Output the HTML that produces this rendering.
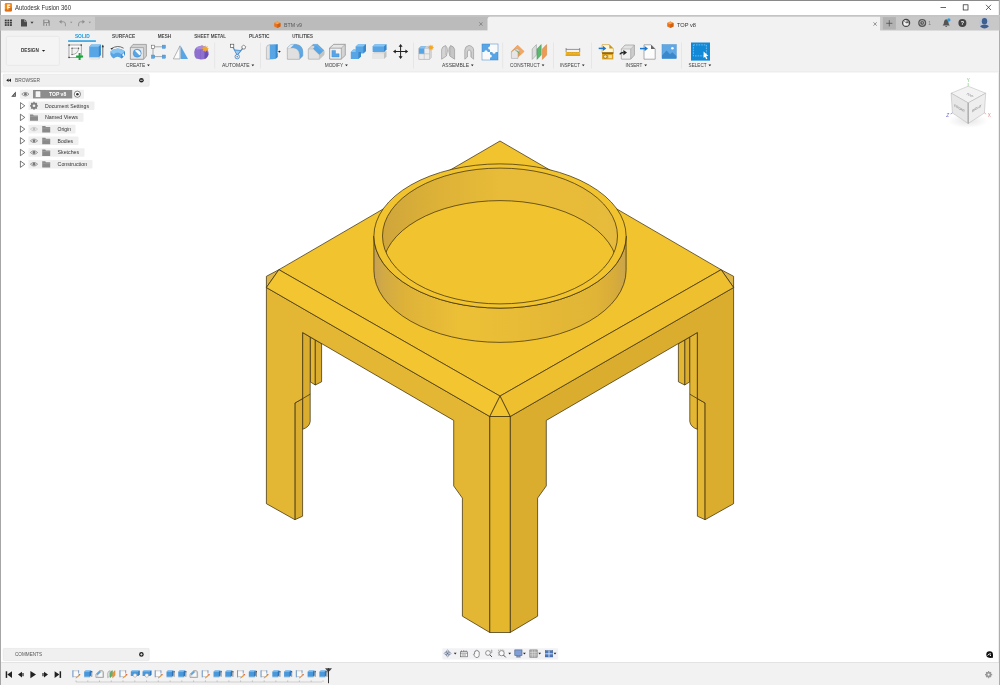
<!DOCTYPE html>
<html><head><meta charset="utf-8"><title>Autodesk Fusion 360</title>
<style>
html,body{margin:0;padding:0;background:#fff;}
body{width:1000px;height:685px;overflow:hidden;position:relative;font-family:"Liberation Sans", sans-serif;}
svg{position:absolute;left:0;top:0;display:block;will-change:transform}
text{font-family:"Liberation Sans", sans-serif;}
</style></head><body>
<svg width="1000" height="685" viewBox="0 0 1000 685">
<rect x="0" y="0" width="1000" height="15" fill="#ffffff" />
<rect x="0" y="0" width="1000" height="1" fill="#8a8a8a" />
<rect x="0" y="0" width="1" height="685" fill="#a6a6a6" />
<rect x="998.8" y="0" width="1.2" height="685" fill="#adadad" />
<g id="appicon"><rect x="4.8" y="3" width="7.2" height="8.4" rx="1.2" fill="#f08a1d"/><path d="M7.2,4.5 h3 v1.2 h-1.7 v1.2 h1.4 v1.2 h-1.4 v2 h-1.3 z" fill="#fff"/><path d="M4.8,9.5 l7.2,-2 v2.7 a1.2,1.2 0 0 1 -1.2,1.2 h-4.8 a1.2,1.2 0 0 1 -1.2,-1.2z" fill="#c85a10" opacity="0.55"/></g>
<text x="15" y="9.7" font-size="6.4" fill="#333" font-weight="normal" textLength="56" lengthAdjust="spacingAndGlyphs" >Autodesk Fusion 360</text>
<path d="M940.5,7.5 h5.5 M986,4.8 l5,5.2 M991,4.8 l-5,5.2" stroke="#222" stroke-width="0.7" fill="none"/><rect x="963.2" y="4.8" width="4.8" height="5.2" fill="none" stroke="#222" stroke-width="0.7"/>
<rect x="0" y="15" width="1000" height="15.8" fill="#bbbbbb" />
<rect x="1" y="15.9" width="94" height="14.6" fill="#cbcbcb" />
<path d="M491.5,15.8 H880.3 V31 H487.5 V19.4 Q487.6,16.6 491.5,15.8 Z" fill="#f2f2f2"/>
<path d="M0,15.8 H484 Q487.5,16 487.5,20 V30.5 H0 Z" fill="none"/>
<rect x="880.3" y="15.8" width="118.7" height="14.7" fill="#c8c8c8" />
<rect x="882.8" y="17.1" width="13.1" height="12.4" fill="#b2b2b2" />
<rect x="0" y="15" width="1000" height="1.7" fill="#c4c4c4" />
<rect x="1" y="30.5" width="998" height="40.5" fill="#f2f2f2" />
<defs><linearGradient id="gTb" x1="0" x2="0" y1="0" y2="1"><stop offset="0" stop-color="#f0f0f0"/><stop offset="0.5" stop-color="#ebebeb"/><stop offset="1" stop-color="#ffffff"/></linearGradient></defs><rect x="1" y="70.8" width="998" height="2.2" fill="url(#gTb)"/>
<rect x="6.4" y="36.4" width="53" height="29" rx="1.5" fill="#f4f4f4" stroke="#e2e2e2" stroke-width="0.6"/>
<text x="21" y="52.3" font-size="5.2" fill="#333" font-weight="bold" textLength="17.8" lengthAdjust="spacingAndGlyphs" >DESIGN</text>
<path d="M41.9,49.9 h3.3 l-1.65,1.9 z" fill="#222"/>
<text x="74.9" y="37.7" font-size="4.7" fill="#1a98dc" font-weight="bold" textLength="14.8" lengthAdjust="spacingAndGlyphs" >SOLID</text>
<rect x="68.1" y="40.3" width="27.8" height="1.5" fill="#1c9ce2" />
<text x="112.1" y="37.7" font-size="4.7" fill="#484848" font-weight="bold" textLength="23" lengthAdjust="spacingAndGlyphs" >SURFACE</text>
<text x="157.7" y="37.7" font-size="4.7" fill="#484848" font-weight="bold" textLength="13.5" lengthAdjust="spacingAndGlyphs" >MESH</text>
<text x="194.2" y="37.7" font-size="4.7" fill="#484848" font-weight="bold" textLength="31.8" lengthAdjust="spacingAndGlyphs" >SHEET METAL</text>
<text x="249" y="37.7" font-size="4.7" fill="#484848" font-weight="bold" textLength="20.5" lengthAdjust="spacingAndGlyphs" >PLASTIC</text>
<text x="292.2" y="37.7" font-size="4.7" fill="#484848" font-weight="bold" textLength="20.8" lengthAdjust="spacingAndGlyphs" >UTILITIES</text>
<text x="126" y="67.2" font-size="5.0" fill="#3c3c3c" font-weight="normal" textLength="19.2" lengthAdjust="spacingAndGlyphs" >CREATE</text>
<path d="M147.1,64.4 h2.7 l-1.35,1.8 z" fill="#222"/>
<text x="222" y="67.2" font-size="5.0" fill="#3c3c3c" font-weight="normal" textLength="27.6" lengthAdjust="spacingAndGlyphs" >AUTOMATE</text>
<path d="M251.5,64.4 h2.7 l-1.35,1.8 z" fill="#222"/>
<text x="324.7" y="67.2" font-size="5.0" fill="#3c3c3c" font-weight="normal" textLength="18.5" lengthAdjust="spacingAndGlyphs" >MODIFY</text>
<path d="M345.09999999999997,64.4 h2.7 l-1.35,1.8 z" fill="#222"/>
<text x="442" y="67.2" font-size="5.0" fill="#3c3c3c" font-weight="normal" textLength="27" lengthAdjust="spacingAndGlyphs" >ASSEMBLE</text>
<path d="M470.9,64.4 h2.7 l-1.35,1.8 z" fill="#222"/>
<text x="510.1" y="67.2" font-size="5.0" fill="#3c3c3c" font-weight="normal" textLength="29.7" lengthAdjust="spacingAndGlyphs" >CONSTRUCT</text>
<path d="M541.7,64.4 h2.7 l-1.35,1.8 z" fill="#222"/>
<text x="559.9" y="67.2" font-size="5.0" fill="#3c3c3c" font-weight="normal" textLength="20.1" lengthAdjust="spacingAndGlyphs" >INSPECT</text>
<path d="M581.9,64.4 h2.7 l-1.35,1.8 z" fill="#222"/>
<text x="625.6" y="67.2" font-size="5.0" fill="#3c3c3c" font-weight="normal" textLength="16.8" lengthAdjust="spacingAndGlyphs" >INSERT</text>
<path d="M644.3,64.4 h2.7 l-1.35,1.8 z" fill="#222"/>
<text x="688.6" y="67.2" font-size="5.0" fill="#3c3c3c" font-weight="normal" textLength="18" lengthAdjust="spacingAndGlyphs" >SELECT</text>
<path d="M708.5,64.4 h2.7 l-1.35,1.8 z" fill="#222"/>
<rect x="214.5" y="42.5" width="0.6" height="26" fill="#dedede" />
<rect x="260" y="42.5" width="0.6" height="26" fill="#dedede" />
<rect x="413" y="42.5" width="0.6" height="26" fill="#dedede" />
<rect x="502.5" y="42.5" width="0.6" height="26" fill="#dedede" />
<rect x="553" y="42.5" width="0.6" height="26" fill="#dedede" />
<rect x="591" y="42.5" width="0.6" height="26" fill="#dedede" />
<rect x="681" y="42.5" width="0.6" height="26" fill="#dedede" />
<g transform="translate(274.2,21.2) scale(0.95)"><path d="M0,1.8 L3.3,0.4 L6.6,1.8 L6.6,5.6 L3.3,7.2 L0,5.6 Z" fill="#e8731c"/><path d="M0,1.8 L3.3,0.4 L6.6,1.8 L3.3,3.3 Z" fill="#f7a352"/><path d="M3.3,3.3 L6.6,1.8 L6.6,5.6 L3.3,7.2 Z" fill="#cf5f12"/></g>
<text x="284" y="26.8" font-size="6.2" fill="#555" font-weight="normal" textLength="18" lengthAdjust="spacingAndGlyphs" >BTM v9</text>
<path d="M479.3,22.3 l3.2,3.4 m0,-3.4 l-3.2,3.4" stroke="#666" stroke-width="0.6" fill="none"/>
<g transform="translate(667.2,21.2) scale(0.95)"><path d="M0,1.8 L3.3,0.4 L6.6,1.8 L6.6,5.6 L3.3,7.2 L0,5.6 Z" fill="#e8731c"/><path d="M0,1.8 L3.3,0.4 L6.6,1.8 L3.3,3.3 Z" fill="#f7a352"/><path d="M3.3,3.3 L6.6,1.8 L6.6,5.6 L3.3,7.2 Z" fill="#cf5f12"/></g>
<text x="677" y="26.8" font-size="6.2" fill="#333" font-weight="normal" textLength="19" lengthAdjust="spacingAndGlyphs" >TOP v8</text>
<path d="M873.5,22.3 l3.2,3.4 m0,-3.4 l-3.2,3.4" stroke="#555" stroke-width="0.6" fill="none"/>
<rect x="3.2" y="74.2" width="146" height="12" rx="1" fill="#f0f0f0" stroke="#dddddd" stroke-width="0.5"/>
<text x="15" y="82" font-size="4.7" fill="#555" font-weight="normal" textLength="25" lengthAdjust="spacingAndGlyphs" >BROWSER</text>
<path d="M6.2,80.2 l2.4,-1.7 v3.4 z M8.6,80.2 l2.4,-1.7 v3.4 z" fill="#222"/>
<circle cx="141.4" cy="80.2" r="2.3" fill="#222"/><rect x="140.1" y="79.8" width="2.6" height="0.8" fill="#fff"/>
<rect x="3.2" y="648.4" width="146" height="12.2" rx="1" fill="#f0f0f0" stroke="#dddddd" stroke-width="0.5"/>
<text x="15" y="656.2" font-size="4.7" fill="#555" font-weight="normal" textLength="27" lengthAdjust="spacingAndGlyphs" >COMMENTS</text>
<circle cx="141.4" cy="654.4" r="2.3" fill="#222"/><path d="M140.2,654.4 h2.4 M141.4,653.2 v2.4" stroke="#fff" stroke-width="0.7"/>
<rect x="1" y="662.4" width="998" height="22.6" fill="#f2f2f2" />
<rect x="1" y="662.0" width="998" height="0.7" fill="#dadada" />
<path d="M11.2,96.8 L15.8,96.8 L15.8,91.60000000000001 Z" fill="#444"/><path d="M13.3,95.8 L14.9,95.8 L14.9,93.9 Z" fill="#fff" opacity="0.7"/>
<rect x="20" y="89.7" width="64" height="9" rx="1" fill="#f0f0f0"/>
<g opacity="1"><path d="M21.799999999999997,94.2 Q25.4,90.60000000000001 29.0,94.2 Q25.4,97.8 21.799999999999997,94.2 Z" fill="none" stroke="#777" stroke-width="0.7"/><circle cx="25.4" cy="94.2" r="1.4" fill="#777"/></g>
<rect x="33" y="90.0" width="39.2" height="8.4" fill="#8c8c8c"/>
<rect x="35.2" y="91.0" width="5.6" height="6.4" fill="#f4f4f4" stroke="#666" stroke-width="0.4"/>
<text x="49" y="96.0" font-size="5" fill="#fff" font-weight="bold" textLength="17.2" lengthAdjust="spacingAndGlyphs" >TOP v8</text>
<circle cx="77.4" cy="94.2" r="3.1" fill="#fff" stroke="#333" stroke-width="0.6"/><circle cx="77.4" cy="94.2" r="1.3" fill="#333"/>
<path d="M20.4,102.6 L24.799999999999997,105.8 L20.4,109.0 Z" fill="#fff" stroke="#333" stroke-width="0.65" stroke-linejoin="round"/>
<rect x="28.5" y="101.5" width="12" height="8.6" fill="#f0f0f0"/>
<g transform="translate(34,105.8)"><circle r="2.5" fill="none" stroke="#808080" stroke-width="1.5"/><g stroke="#808080" stroke-width="1.3"><path d="M0,-4 V4 M-4,0 H4 M-2.8,-2.8 L2.8,2.8 M-2.8,2.8 L2.8,-2.8"/></g><circle r="1.3" fill="#f0f0f0"/></g>
<rect x="40" y="101.5" width="54.5" height="8.6" rx="1" fill="#efefef"/>
<text x="45" y="107.6" font-size="5" fill="#333" font-weight="normal" textLength="44" lengthAdjust="spacingAndGlyphs" >Document Settings</text>
<path d="M20.4,114.2 L24.799999999999997,117.4 L20.4,120.60000000000001 Z" fill="#fff" stroke="#333" stroke-width="0.65" stroke-linejoin="round"/>
<rect x="28.5" y="113.10000000000001" width="12" height="8.6" fill="#f0f0f0"/>
<path d="M30,114.4 h3 l0.8,1 h4.2 v5.4 h-8 z" fill="#8a8a8a"/><path d="M30,116.5 h8" stroke="#b5b5b5" stroke-width="0.4"/>
<rect x="40" y="113.10000000000001" width="43.5" height="8.6" rx="1" fill="#efefef"/>
<text x="45" y="119.2" font-size="5" fill="#333" font-weight="normal" textLength="33" lengthAdjust="spacingAndGlyphs" >Named Views</text>
<path d="M20.4,125.89999999999999 L24.799999999999997,129.1 L20.4,132.29999999999998 Z" fill="#fff" stroke="#333" stroke-width="0.65" stroke-linejoin="round"/>
<rect x="28.5" y="124.8" width="24" height="8.6" fill="#f0f0f0"/>
<g opacity="0.7"><path d="M30.4,129.1 Q34,125.5 37.6,129.1 Q34,132.7 30.4,129.1 Z" fill="none" stroke="#aaa" stroke-width="0.7"/><circle cx="34" cy="129.1" r="1.4" fill="#aaa"/></g>
<path d="M42.2,126.1 h3 l0.8,1 h4.2 v5.4 h-8 z" fill="#8a8a8a"/><path d="M42.2,128.2 h8" stroke="#b5b5b5" stroke-width="0.4"/>
<rect x="52" y="124.8" width="23.5" height="8.6" rx="1" fill="#efefef"/>
<text x="57.6" y="130.9" font-size="5" fill="#333" font-weight="normal" textLength="13.5" lengthAdjust="spacingAndGlyphs" >Origin</text>
<path d="M20.4,137.60000000000002 L24.799999999999997,140.8 L20.4,144.0 Z" fill="#fff" stroke="#333" stroke-width="0.65" stroke-linejoin="round"/>
<rect x="28.5" y="136.5" width="24" height="8.6" fill="#f0f0f0"/>
<g opacity="1"><path d="M30.4,140.8 Q34,137.20000000000002 37.6,140.8 Q34,144.4 30.4,140.8 Z" fill="none" stroke="#777" stroke-width="0.7"/><circle cx="34" cy="140.8" r="1.4" fill="#777"/></g>
<path d="M42.2,137.8 h3 l0.8,1 h4.2 v5.4 h-8 z" fill="#8a8a8a"/><path d="M42.2,139.9 h8" stroke="#b5b5b5" stroke-width="0.4"/>
<rect x="52" y="136.5" width="26.5" height="8.6" rx="1" fill="#efefef"/>
<text x="57.6" y="142.60000000000002" font-size="5" fill="#333" font-weight="normal" textLength="15.5" lengthAdjust="spacingAndGlyphs" >Bodies</text>
<path d="M20.4,149.3 L24.799999999999997,152.5 L20.4,155.7 Z" fill="#fff" stroke="#333" stroke-width="0.65" stroke-linejoin="round"/>
<rect x="28.5" y="148.2" width="24" height="8.6" fill="#f0f0f0"/>
<g opacity="1"><path d="M30.4,152.5 Q34,148.9 37.6,152.5 Q34,156.1 30.4,152.5 Z" fill="none" stroke="#777" stroke-width="0.7"/><circle cx="34" cy="152.5" r="1.4" fill="#777"/></g>
<path d="M42.2,149.5 h3 l0.8,1 h4.2 v5.4 h-8 z" fill="#8a8a8a"/><path d="M42.2,151.6 h8" stroke="#b5b5b5" stroke-width="0.4"/>
<rect x="52" y="148.2" width="32.5" height="8.6" rx="1" fill="#efefef"/>
<text x="57.6" y="154.3" font-size="5" fill="#333" font-weight="normal" textLength="21.5" lengthAdjust="spacingAndGlyphs" >Sketches</text>
<path d="M20.4,161.0 L24.799999999999997,164.2 L20.4,167.39999999999998 Z" fill="#fff" stroke="#333" stroke-width="0.65" stroke-linejoin="round"/>
<rect x="28.5" y="159.89999999999998" width="24" height="8.6" fill="#f0f0f0"/>
<g opacity="1"><path d="M30.4,164.2 Q34,160.6 37.6,164.2 Q34,167.79999999999998 30.4,164.2 Z" fill="none" stroke="#777" stroke-width="0.7"/><circle cx="34" cy="164.2" r="1.4" fill="#777"/></g>
<path d="M42.2,161.2 h3 l0.8,1 h4.2 v5.4 h-8 z" fill="#8a8a8a"/><path d="M42.2,163.29999999999998 h8" stroke="#b5b5b5" stroke-width="0.4"/>
<rect x="52" y="159.89999999999998" width="40.5" height="8.6" rx="1" fill="#efefef"/>
<text x="57.6" y="166.0" font-size="5" fill="#333" font-weight="normal" textLength="29.5" lengthAdjust="spacingAndGlyphs" >Construction</text>
<g fill="#222"><rect x="5.7" y="671.3000000000001" width="1.5" height="6.6"/><path d="M12,671.3000000000001 L7.3,674.6 L12,677.9 Z"/><path d="M22,671.8000000000001 L18,674.6 L22,677.4 Z"/><rect x="22.4" y="673.0" width="1.2" height="3.2"/><path d="M30.4,671.0 L36,674.6 L30.4,678.2 Z"/><path d="M44,671.8000000000001 L48,674.6 L44,677.4 Z"/><rect x="42.4" y="673.0" width="1.2" height="3.2"/><path d="M54.6,671.3000000000001 L59.4,674.6 L54.6,677.9 Z"/><rect x="59.6" y="671.3000000000001" width="1.5" height="6.6"/></g>
<g transform="translate(72.0,669.8)"><path d="M0.9,1 H6.6 V6.8 H0.9 Z" fill="#f9f9f9" stroke="#a4a4a4" stroke-width="0.5"/><path d="M0.9,0.4 V7.6" stroke="#4a86cc" stroke-width="0.7"/><path d="M6.6,0.4 V3" stroke="#4a86cc" stroke-width="0.6"/><path d="M4,7.6 L7.6,4.2 L8.4,5 L4.8,8.2 Z" fill="#f0962a"/><path d="M7,4.8 L7.6,4.2 L8.4,5 L7.8,5.6 Z" fill="#d84a3a"/><path d="M4,7.6 L4.8,8.2 L3.6,8.5 Z" fill="#555"/></g>
<g transform="translate(83.76,669.8)"><path d="M0.4,6.6 H5.8 L7.2,5.4 V7 L5.8,8.2 H0.4 Z" fill="#dadada"/><path d="M0.4,2 L1.8,0.6 H7.2 V5.6 L5.8,7 H0.4 Z" fill="#4a98dc"/><path d="M0.4,2 L1.8,0.6 H7.2 L5.8,2 Z" fill="#86c0f0"/><path d="M5.8,2 L7.2,0.6 V5.6 L5.8,7 Z" fill="#2e73b8"/><path d="M8,1.2 v5.8" stroke="#444" stroke-width="0.6"/><path d="M7.3,2.4 L8,0.8 L8.7,2.4 Z" fill="#444"/></g>
<g transform="translate(95.52,669.8)"><path d="M0.4,4.4 L4.2,0.8 H6.4 Q8,1 8,3 V7.6 H0.4 Z" fill="#ececec" stroke="#777" stroke-width="0.55" stroke-linejoin="round"/><path d="M0.8,4.2 L4.2,1 L5.6,2.2 L2.2,5.4 Z" fill="#5aa5e6"/><path d="M2.2,5.4 L5.6,2.2 H7 V7.2 H2.2 Z" fill="#f7f7f7" stroke="#999" stroke-width="0.3"/></g>
<g transform="translate(107.28,669.8)"><path d="M0.4,3.4 Q0.6,1.6 2.8,0.8 V5.8 L0.4,8 Z" fill="#e2e2e2" stroke="#8a8a8a" stroke-width="0.5" stroke-linejoin="round"/><path d="M2.8,3.2 Q3.2,1.4 5.2,0.8 V5.8 L2.8,8 Z" fill="#5cb56c" stroke="#3b8a4a" stroke-width="0.35" stroke-linejoin="round"/><path d="M5.3,3 L7.8,0.8 V5.8 L5.3,8 Z" fill="#ee9a3c" stroke="#c07020" stroke-width="0.35" stroke-linejoin="round"/></g>
<g transform="translate(119.03999999999999,669.8)"><path d="M0.9,1 H6.6 V6.8 H0.9 Z" fill="#f9f9f9" stroke="#a4a4a4" stroke-width="0.5"/><path d="M0.9,0.4 V7.6" stroke="#4a86cc" stroke-width="0.7"/><path d="M6.6,0.4 V3" stroke="#4a86cc" stroke-width="0.6"/><path d="M4,7.6 L7.6,4.2 L8.4,5 L4.8,8.2 Z" fill="#f0962a"/><path d="M7,4.8 L7.6,4.2 L8.4,5 L7.8,5.6 Z" fill="#d84a3a"/><path d="M4,7.6 L4.8,8.2 L3.6,8.5 Z" fill="#555"/></g>
<g transform="translate(130.8,669.8)"><path d="M0,1.8 L1.2,0.6 H8.8 V4.8 L7.6,6.2 H0 Z" fill="#4a98dc"/><path d="M0,1.8 L1.2,0.6 H8.8 L7.6,1.8 Z" fill="#86c0f0"/><path d="M7.6,1.8 L8.8,0.6 V4.8 L7.6,6.2 Z" fill="#2e73b8"/><path d="M2.4,4.6 Q4.2,3 6,4.6 V6.4 Q4.2,8.8 2.4,6.4 Z" fill="#f6f6f6" stroke="#888" stroke-width="0.45"/></g>
<g transform="translate(142.56,669.8)"><path d="M0,1.8 L1.2,0.6 H8.8 V4.8 L7.6,6.2 H0 Z" fill="#4a98dc"/><path d="M0,1.8 L1.2,0.6 H8.8 L7.6,1.8 Z" fill="#86c0f0"/><path d="M7.6,1.8 L8.8,0.6 V4.8 L7.6,6.2 Z" fill="#2e73b8"/><path d="M2.4,4.6 Q4.2,3 6,4.6 V6.4 Q4.2,8.8 2.4,6.4 Z" fill="#f6f6f6" stroke="#888" stroke-width="0.45"/></g>
<g transform="translate(154.32,669.8)"><path d="M0.9,1 H6.6 V6.8 H0.9 Z" fill="#f9f9f9" stroke="#a4a4a4" stroke-width="0.5"/><path d="M0.9,0.4 V7.6" stroke="#4a86cc" stroke-width="0.7"/><path d="M6.6,0.4 V3" stroke="#4a86cc" stroke-width="0.6"/><path d="M4,7.6 L7.6,4.2 L8.4,5 L4.8,8.2 Z" fill="#f0962a"/><path d="M7,4.8 L7.6,4.2 L8.4,5 L7.8,5.6 Z" fill="#d84a3a"/><path d="M4,7.6 L4.8,8.2 L3.6,8.5 Z" fill="#555"/></g>
<g transform="translate(166.07999999999998,669.8)"><path d="M0.4,6.6 H5.8 L7.2,5.4 V7 L5.8,8.2 H0.4 Z" fill="#dadada"/><path d="M0.4,2 L1.8,0.6 H7.2 V5.6 L5.8,7 H0.4 Z" fill="#4a98dc"/><path d="M0.4,2 L1.8,0.6 H7.2 L5.8,2 Z" fill="#86c0f0"/><path d="M5.8,2 L7.2,0.6 V5.6 L5.8,7 Z" fill="#2e73b8"/><path d="M8,1.2 v5.8" stroke="#444" stroke-width="0.6"/><path d="M7.3,2.4 L8,0.8 L8.7,2.4 Z" fill="#444"/></g>
<g transform="translate(177.84,669.8)"><path d="M0.4,6.6 H5.8 L7.2,5.4 V7 L5.8,8.2 H0.4 Z" fill="#dadada"/><path d="M0.4,2 L1.8,0.6 H7.2 V5.6 L5.8,7 H0.4 Z" fill="#4a98dc"/><path d="M0.4,2 L1.8,0.6 H7.2 L5.8,2 Z" fill="#86c0f0"/><path d="M5.8,2 L7.2,0.6 V5.6 L5.8,7 Z" fill="#2e73b8"/><path d="M8,1.2 v5.8" stroke="#444" stroke-width="0.6"/><path d="M7.3,2.4 L8,0.8 L8.7,2.4 Z" fill="#444"/></g>
<g transform="translate(189.6,669.8)"><path d="M0.4,4.4 L4.2,0.8 H6.4 Q8,1 8,3 V7.6 H0.4 Z" fill="#ececec" stroke="#777" stroke-width="0.55" stroke-linejoin="round"/><path d="M0.8,4.2 L4.2,1 L5.6,2.2 L2.2,5.4 Z" fill="#5aa5e6"/><path d="M2.2,5.4 L5.6,2.2 H7 V7.2 H2.2 Z" fill="#f7f7f7" stroke="#999" stroke-width="0.3"/></g>
<g transform="translate(201.35999999999999,669.8)"><path d="M0.9,1 H6.6 V6.8 H0.9 Z" fill="#f9f9f9" stroke="#a4a4a4" stroke-width="0.5"/><path d="M0.9,0.4 V7.6" stroke="#4a86cc" stroke-width="0.7"/><path d="M6.6,0.4 V3" stroke="#4a86cc" stroke-width="0.6"/><path d="M4,7.6 L7.6,4.2 L8.4,5 L4.8,8.2 Z" fill="#f0962a"/><path d="M7,4.8 L7.6,4.2 L8.4,5 L7.8,5.6 Z" fill="#d84a3a"/><path d="M4,7.6 L4.8,8.2 L3.6,8.5 Z" fill="#555"/></g>
<g transform="translate(213.12,669.8)"><path d="M0.4,6.6 H5.8 L7.2,5.4 V7 L5.8,8.2 H0.4 Z" fill="#dadada"/><path d="M0.4,2 L1.8,0.6 H7.2 V5.6 L5.8,7 H0.4 Z" fill="#4a98dc"/><path d="M0.4,2 L1.8,0.6 H7.2 L5.8,2 Z" fill="#86c0f0"/><path d="M5.8,2 L7.2,0.6 V5.6 L5.8,7 Z" fill="#2e73b8"/><path d="M8,1.2 v5.8" stroke="#444" stroke-width="0.6"/><path d="M7.3,2.4 L8,0.8 L8.7,2.4 Z" fill="#444"/></g>
<g transform="translate(224.88,669.8)"><path d="M0.4,6.6 H5.8 L7.2,5.4 V7 L5.8,8.2 H0.4 Z" fill="#dadada"/><path d="M0.4,2 L1.8,0.6 H7.2 V5.6 L5.8,7 H0.4 Z" fill="#4a98dc"/><path d="M0.4,2 L1.8,0.6 H7.2 L5.8,2 Z" fill="#86c0f0"/><path d="M5.8,2 L7.2,0.6 V5.6 L5.8,7 Z" fill="#2e73b8"/><path d="M8,1.2 v5.8" stroke="#444" stroke-width="0.6"/><path d="M7.3,2.4 L8,0.8 L8.7,2.4 Z" fill="#444"/></g>
<g transform="translate(236.64,669.8)"><path d="M0.9,1 H6.6 V6.8 H0.9 Z" fill="#f9f9f9" stroke="#a4a4a4" stroke-width="0.5"/><path d="M0.9,0.4 V7.6" stroke="#4a86cc" stroke-width="0.7"/><path d="M6.6,0.4 V3" stroke="#4a86cc" stroke-width="0.6"/><path d="M4,7.6 L7.6,4.2 L8.4,5 L4.8,8.2 Z" fill="#f0962a"/><path d="M7,4.8 L7.6,4.2 L8.4,5 L7.8,5.6 Z" fill="#d84a3a"/><path d="M4,7.6 L4.8,8.2 L3.6,8.5 Z" fill="#555"/></g>
<g transform="translate(248.4,669.8)"><path d="M0.4,6.6 H5.8 L7.2,5.4 V7 L5.8,8.2 H0.4 Z" fill="#dadada"/><path d="M0.4,2 L1.8,0.6 H7.2 V5.6 L5.8,7 H0.4 Z" fill="#4a98dc"/><path d="M0.4,2 L1.8,0.6 H7.2 L5.8,2 Z" fill="#86c0f0"/><path d="M5.8,2 L7.2,0.6 V5.6 L5.8,7 Z" fill="#2e73b8"/><path d="M8,1.2 v5.8" stroke="#444" stroke-width="0.6"/><path d="M7.3,2.4 L8,0.8 L8.7,2.4 Z" fill="#444"/></g>
<g transform="translate(260.15999999999997,669.8)"><path d="M0.9,1 H6.6 V6.8 H0.9 Z" fill="#f9f9f9" stroke="#a4a4a4" stroke-width="0.5"/><path d="M0.9,0.4 V7.6" stroke="#4a86cc" stroke-width="0.7"/><path d="M6.6,0.4 V3" stroke="#4a86cc" stroke-width="0.6"/><path d="M4,7.6 L7.6,4.2 L8.4,5 L4.8,8.2 Z" fill="#f0962a"/><path d="M7,4.8 L7.6,4.2 L8.4,5 L7.8,5.6 Z" fill="#d84a3a"/><path d="M4,7.6 L4.8,8.2 L3.6,8.5 Z" fill="#555"/></g>
<g transform="translate(271.91999999999996,669.8)"><path d="M0.4,6.6 H5.8 L7.2,5.4 V7 L5.8,8.2 H0.4 Z" fill="#dadada"/><path d="M0.4,2 L1.8,0.6 H7.2 V5.6 L5.8,7 H0.4 Z" fill="#4a98dc"/><path d="M0.4,2 L1.8,0.6 H7.2 L5.8,2 Z" fill="#86c0f0"/><path d="M5.8,2 L7.2,0.6 V5.6 L5.8,7 Z" fill="#2e73b8"/><path d="M8,1.2 v5.8" stroke="#444" stroke-width="0.6"/><path d="M7.3,2.4 L8,0.8 L8.7,2.4 Z" fill="#444"/></g>
<g transform="translate(283.68,669.8)"><path d="M0.4,6.6 H5.8 L7.2,5.4 V7 L5.8,8.2 H0.4 Z" fill="#dadada"/><path d="M0.4,2 L1.8,0.6 H7.2 V5.6 L5.8,7 H0.4 Z" fill="#4a98dc"/><path d="M0.4,2 L1.8,0.6 H7.2 L5.8,2 Z" fill="#86c0f0"/><path d="M5.8,2 L7.2,0.6 V5.6 L5.8,7 Z" fill="#2e73b8"/><path d="M8,1.2 v5.8" stroke="#444" stroke-width="0.6"/><path d="M7.3,2.4 L8,0.8 L8.7,2.4 Z" fill="#444"/></g>
<g transform="translate(295.44,669.8)"><path d="M0.9,1 H6.6 V6.8 H0.9 Z" fill="#f9f9f9" stroke="#a4a4a4" stroke-width="0.5"/><path d="M0.9,0.4 V7.6" stroke="#4a86cc" stroke-width="0.7"/><path d="M6.6,0.4 V3" stroke="#4a86cc" stroke-width="0.6"/><path d="M4,7.6 L7.6,4.2 L8.4,5 L4.8,8.2 Z" fill="#f0962a"/><path d="M7,4.8 L7.6,4.2 L8.4,5 L7.8,5.6 Z" fill="#d84a3a"/><path d="M4,7.6 L4.8,8.2 L3.6,8.5 Z" fill="#555"/></g>
<g transform="translate(307.2,669.8)"><path d="M0.4,6.6 H5.8 L7.2,5.4 V7 L5.8,8.2 H0.4 Z" fill="#dadada"/><path d="M0.4,2 L1.8,0.6 H7.2 V5.6 L5.8,7 H0.4 Z" fill="#4a98dc"/><path d="M0.4,2 L1.8,0.6 H7.2 L5.8,2 Z" fill="#86c0f0"/><path d="M5.8,2 L7.2,0.6 V5.6 L5.8,7 Z" fill="#2e73b8"/><path d="M8,1.2 v5.8" stroke="#444" stroke-width="0.6"/><path d="M7.3,2.4 L8,0.8 L8.7,2.4 Z" fill="#444"/></g>
<g transform="translate(318.96000000000004,669.8)"><path d="M0.4,6.6 H5.8 L7.2,5.4 V7 L5.8,8.2 H0.4 Z" fill="#dadada"/><path d="M0.4,2 L1.8,0.6 H7.2 V5.6 L5.8,7 H0.4 Z" fill="#4a98dc"/><path d="M0.4,2 L1.8,0.6 H7.2 L5.8,2 Z" fill="#86c0f0"/><path d="M5.8,2 L7.2,0.6 V5.6 L5.8,7 Z" fill="#2e73b8"/><path d="M8,1.2 v5.8" stroke="#444" stroke-width="0.6"/><path d="M7.3,2.4 L8,0.8 L8.7,2.4 Z" fill="#444"/></g>
<path d="M76,682 H322" stroke="#b8b8b8" stroke-width="0.6"/>
<path d="M76.0,680.4 v1.6 M87.8,680.4 v1.6 M99.5,680.4 v1.6 M111.3,680.4 v1.6 M123.0,680.4 v1.6 M134.8,680.4 v1.6 M146.6,680.4 v1.6 M158.3,680.4 v1.6 M170.1,680.4 v1.6 M181.8,680.4 v1.6 M193.6,680.4 v1.6 M205.4,680.4 v1.6 M217.1,680.4 v1.6 M228.9,680.4 v1.6 M240.6,680.4 v1.6 M252.4,680.4 v1.6 M264.2,680.4 v1.6 M275.9,680.4 v1.6 M287.7,680.4 v1.6 M299.4,680.4 v1.6 M311.2,680.4 v1.6 M323.0,680.4 v1.6 " stroke="#aaa" stroke-width="0.6"/>
<path d="M325,668.2 h7 l-2.6,3 h-1.8 z" fill="#444"/><rect x="328" y="668.2" width="1" height="15" fill="#333"/>
<g transform="translate(988.6,674.6)"><circle r="2.2" fill="none" stroke="#999" stroke-width="1.3"/><path d="M0,-3.6 V3.6 M-3.6,0 H3.6 M-2.5,-2.5 L2.5,2.5 M-2.5,2.5 L2.5,-2.5" stroke="#999" stroke-width="1.1"/><circle r="1.1" fill="#f2f2f2"/></g>
<defs><radialGradient id="gShadow"><stop offset="0" stop-color="#000" stop-opacity="0.10"/><stop offset="1" stop-color="#000" stop-opacity="0"/></radialGradient></defs>
<ellipse cx="968" cy="121" rx="20" ry="7" fill="url(#gShadow)"/>
<g id="viewcube" stroke-linejoin="round"><path d="M968.2,86.2 L985.7,93.2 L968.2,102.9 L951.1,93.2 Z" fill="#f3f3f3" stroke="#a2a2a2" stroke-width="0.4"/><path d="M951.1,93.2 L968.2,102.9 L968.2,123.5 L952.4,113 Z" fill="#e7e7e7" stroke="#a2a2a2" stroke-width="0.4"/><path d="M985.7,93.2 L968.2,102.9 L968.2,123.5 L984.4,113 Z" fill="#eeeeee" stroke="#a2a2a2" stroke-width="0.4"/><path d="M968.2,102.9 V123.5" stroke="#6a6a6a" stroke-width="0.5"/></g>
<text transform="matrix(0.86,0.42,-0.86,0.42,968.6,95.6)" font-size="3.6" fill="#999" text-anchor="middle" font-weight="bold">TOP</text>
<text transform="matrix(0.87,0.5,0,1,959.6,109.6)" font-size="3.6" fill="#999" text-anchor="middle" font-weight="bold">FRONT</text>
<text transform="matrix(0.87,-0.5,0,1,976.8,109.6)" font-size="3.6" fill="#999" text-anchor="middle" font-weight="bold">RIGHT</text>
<path d="M968.2,86.2 V83" stroke="#7fd47f" stroke-width="0.7"/><path d="M952.4,113 L950.6,114" stroke="#7d7dd8" stroke-width="0.7"/><path d="M984.4,113 L986.2,114" stroke="#e89a9a" stroke-width="0.7"/>
<text x="968.2" y="81.6" font-size="4.6" fill="#72cc72" font-weight="normal" text-anchor="middle" >Y</text>
<text x="947.6" y="116.8" font-size="4.6" fill="#6f6fd0" font-weight="normal" text-anchor="middle" font-style="italic">Z</text>
<text x="989.4" y="116.8" font-size="4.6" fill="#e58c8c" font-weight="normal" text-anchor="middle" >X</text>
<rect x="442.3" y="648.2" width="115.9" height="11.3" rx="1" fill="#f2f2f5"/>
<g transform="translate(447.6,653.4)" fill="none" stroke="#5a6b8c" stroke-width="0.6"><ellipse rx="3.4" ry="1.5"/><ellipse rx="1.5" ry="3.4"/><circle r="0.8" fill="#5a6b8c" stroke="none"/></g>
<path d="M453.8,652.7 h2.8 l-1.4,1.9 z" fill="#222"/>
<g transform="translate(460,650)"><rect x="0.3" y="1.8" width="7" height="5" fill="#f7f7f7" stroke="#555" stroke-width="0.6"/><path d="M0.3,3.3 h7" stroke="#555" stroke-width="0.5"/><path d="M1.5,1.8 v-1.4 M3.8,1.8 v-1.8 M6.1,1.8 v-1.4" stroke="#555" stroke-width="0.6"/><path d="M1.6,5 h4.4" stroke="#888" stroke-width="0.8"/></g>
<g transform="translate(473,649.6)"><path d="M1.6,4.6 V2 Q2.2,1.2 2.7,2 V1 Q3.3,0.2 3.9,1 V1.2 Q4.5,0.5 5.1,1.3 V2 Q5.7,1.4 6.2,2.2 V5.6 Q6,8 4,8 Q2.4,8 1.6,6.6 L0.5,4.6 Q0.8,3.7 1.6,4.6 Z" fill="#fafafa" stroke="#444" stroke-width="0.55"/></g>
<g transform="translate(485,649.8)" fill="none" stroke="#555" stroke-width="0.6"><circle cx="3" cy="3.2" r="2.4" fill="#f9f9f9"/><path d="M4.8,5 L7,7.2" stroke-width="1"/><path d="M6.6,0.4 v2.4 M5.8,0.9 l0.8,-0.6 l0.8,0.6 M5.8,2.3 l0.8,0.6 l0.8,-0.6" stroke-width="0.4"/></g>
<g transform="translate(498,649.4)" fill="none" stroke="#555" stroke-width="0.6"><rect x="0.4" y="0.6" width="5.4" height="5.4" stroke-dasharray="1 0.7" stroke="#777" stroke-width="0.5"/><circle cx="3.6" cy="3.8" r="2.6" fill="#f9f9f9"/><path d="M5.5,5.7 L7.8,8" stroke-width="1"/></g>
<path d="M508.3,652.7 h2.8 l-1.4,1.9 z" fill="#222"/>
<g transform="translate(514.5,649.6)"><rect x="0.3" y="0.3" width="7.2" height="5.6" fill="#7f9fd6" stroke="#4a5f86" stroke-width="0.6"/><path d="M2.4,5.9 v1.2 h3 v-1.2 M1.4,7.4 h5" stroke="#4a5f86" stroke-width="0.6" fill="none"/></g>
<path d="M523.0,652.7 h2.8 l-1.4,1.9 z" fill="#222"/>
<g transform="translate(529.5,649.6)"><rect x="0.3" y="0.3" width="7.4" height="7.4" fill="#a9a9a9" stroke="#6e6e6e" stroke-width="0.5"/><path d="M2.8,0.3 v7.4 M5.3,0.3 v7.4 M0.3,2.8 h7.4 M0.3,5.3 h7.4" stroke="#e6e6e6" stroke-width="0.5"/></g>
<path d="M538.3,652.7 h2.8 l-1.4,1.9 z" fill="#222"/>
<g transform="translate(545,650.4)"><rect x="0.2" y="0.2" width="7.6" height="6.4" fill="#4d78c0" stroke="#34507f" stroke-width="0.4"/><path d="M4,0.2 v6.4 M0.2,3.4 h7.6" stroke="#eef2fa" stroke-width="0.8"/></g>
<path d="M553.5999999999999,652.7 h2.8 l-1.4,1.9 z" fill="#222"/>
<circle cx="989.6" cy="654.5" r="3.3" fill="#111"/><rect x="989.6" y="654.5" width="3.3" height="3.3" fill="#111"/><path d="M987.6,655.6 q0.8,-2.2 3.4,-1.8" stroke="#fff" stroke-width="0.9" fill="none"/><circle cx="990.4" cy="655.4" r="0.6" fill="#fff"/>
<rect x="4.8" y="19.6" width="1.9" height="1.7" fill="#3a3a3a"/><rect x="7.4" y="19.6" width="1.9" height="1.7" fill="#3a3a3a"/><rect x="10.0" y="19.6" width="1.9" height="1.7" fill="#3a3a3a"/><rect x="4.8" y="21.9" width="1.9" height="1.7" fill="#3a3a3a"/><rect x="7.4" y="21.9" width="1.9" height="1.7" fill="#3a3a3a"/><rect x="10.0" y="21.9" width="1.9" height="1.7" fill="#3a3a3a"/><rect x="4.8" y="24.2" width="1.9" height="1.7" fill="#3a3a3a"/><rect x="7.4" y="24.2" width="1.9" height="1.7" fill="#3a3a3a"/><rect x="10.0" y="24.2" width="1.9" height="1.7" fill="#3a3a3a"/>
<path d="M21,19.2 H24.6 L27,21.6 V26.4 H21 Z" fill="#4a4a4a"/><path d="M24.6,19.2 V21.6 H27" fill="none" stroke="#d3d3d3" stroke-width="0.5"/><path d="M30.4,21.8 h3.2 l-1.6,2 z" fill="#3a3a3a"/>
<g transform="translate(43.2,19.8)"><path d="M0,0 H5.4 L6.6,1.2 V6 H0 Z" fill="#8a8a8a"/><rect x="1.2" y="0.5" width="3.6" height="1.8" fill="#d3d3d3"/><rect x="1.2" y="3.4" width="4.2" height="2.6" fill="#d3d3d3"/><rect x="2.8" y="3.9" width="1" height="2.1" fill="#8a8a8a"/></g>
<g fill="none" stroke="#8e8e8e" stroke-width="0.9"><path d="M60.4,21.8 H63.6 Q65.4,22 65.4,24 V26.2"/><path d="M83.6,21.8 H80.4 Q78.6,22 78.6,24 V26.2"/></g><path d="M59,21.8 L61.6,19.8 V23.8 Z M85,21.8 L82.4,19.8 V23.8 Z" fill="#8e8e8e"/>
<path d="M70,21.8 h2.4 l-1.2,1.5 z M88.6,21.8 h2.4 l-1.2,1.5 z" fill="#8e8e8e"/>
<path d="M886.2,23.3 h6.2 M889.3,20.2 v6.2" stroke="#444" stroke-width="0.7"/>
<g transform="translate(906.1,22.9)"><circle r="3.5" fill="#f2f2f2" stroke="#444" stroke-width="1.3"/><path d="M0,0 L-1.6,-1.8 M0,0 L1.8,-0.6" stroke="#444" stroke-width="0.7"/><path d="M0.4,-3.2 A3.3,3.3 0 0 1 3.2,0.6 L0,0 Z" fill="#444" opacity="0.55"/></g>
<g transform="translate(922.2,22.9)"><circle r="4" fill="#555"/><circle r="2.4" fill="none" stroke="#d8d8d8" stroke-width="0.7"/><path d="M0,-1.2 V0.2 H1.1" stroke="#e6e6e6" stroke-width="0.6" fill="none"/></g>
<text x="928.2" y="24.7" font-size="4.8" fill="#777" font-weight="normal" text-anchor="start" >1</text>
<g transform="translate(946.2,23) scale(1.2)"><path d="M-3,2 Q-1.8,1 -1.8,-1 Q-1.6,-3.2 0,-3.2 Q1.6,-3.2 1.8,-1 Q1.8,1 3,2 Z" fill="#555"/><path d="M-0.9,2.6 h1.8 q-0.9,1.4 -1.8,0 z" fill="#555"/><circle cx="2.2" cy="-2.6" r="1.4" fill="#2b9be0"/></g>
<circle cx="962.4" cy="22.9" r="4" fill="#444"/>
<text x="962.4" y="24.9" font-size="5.4" fill="#fff" font-weight="bold" text-anchor="middle" >?</text>
<defs><clipPath id="cAv"><circle cx="984.5" cy="22.9" r="5.6"/></clipPath></defs><circle cx="984.5" cy="22.9" r="5.6" fill="#bcc6d6"/><g clip-path="url(#cAv)" fill="#3f5f8e"><ellipse cx="984.5" cy="21.2" rx="2.7" ry="3.3"/><path d="M979.4,29 Q979.6,25.4 983,24.8 H986 Q989.4,25.4 989.6,29 Z"/></g>
<g transform="translate(68.4,44.4)"><rect x="0.6" y="0.6" width="12.2" height="12.4" fill="#fbfbfb" stroke="#6e6e6e" stroke-width="0.6"/><g fill="#333"><rect x="0" y="0" width="1.3" height="1.3"/><rect x="12.2" y="0" width="1.3" height="1.3"/><rect x="0" y="12.4" width="1.3" height="1.3"/></g><path d="M3.6,3.8 H10.2 Q10,9.6 3.6,10.2 Z" fill="#f2f2f2" stroke="#888" stroke-width="0.7"/><g fill="#555"><circle cx="3.6" cy="3.8" r="0.7"/><circle cx="10.2" cy="3.8" r="0.7"/><circle cx="3.6" cy="10.2" r="0.7"/></g><path d="M11.2,8.7 v7 M7.7,12.2 h7" stroke="#1fa23f" stroke-width="2"/></g>
<g transform="translate(89.2,44.4)"><path d="M0,12.6 L1.6,14.8 H10 L11.6,12.6 Z" fill="#cfcfcf"/><path d="M0,12.6 H9.6 V14.8 H0 Z" fill="#e6e6e6"/><path d="M0,2.4 L2,0 H11.6 V10.6 L9.6,12.8 H0 Z" fill="#57a5e5"/><path d="M0,2.4 L2,0 H11.6 L9.6,2.4 Z" fill="#88c5f2"/><path d="M9.6,2.4 L11.6,0 V10.6 L9.6,12.8 Z" fill="#3a88cc"/><path d="M13.6,1 V13.4" stroke="#333" stroke-width="0.7"/><path d="M12.5,2.8 L13.6,0.2 L14.7,2.8 Z" fill="#333"/></g>
<g transform="translate(110,45.2)"><path d="M0.4,6.2 Q7.6,0.6 15,6 V9.4 Q13,12.6 11.4,13.4 Q7.6,9.6 3.6,13.4 Q1.4,12 0.4,9.6 Z" fill="#57a5e5"/><path d="M0.4,6.2 Q7.6,0.6 15,6 Q13.6,8 11.4,9 Q7.6,5.6 3.6,9 Q1.6,8 0.4,6.2 Z" fill="#88c5f2"/><path d="M11.4,9 Q13.6,8 15,6 V9.4 Q13,12.6 11.4,13.4 Z" fill="#3a88cc"/><ellipse cx="13.3" cy="9.6" rx="0.9" ry="1.6" fill="#fff"/><path d="M1.6,3.4 Q7.6,-0.6 13.6,3" fill="none" stroke="#333" stroke-width="0.7"/><path d="M0.4,3 L3,2.6 L2,4.8 Z" fill="#333"/></g>
<g transform="translate(130,44)"><path d="M0.4,3.6 L3,0.4 H16.4 V12 L13.6,15.2 H0.4 Z" fill="#d2d2d2" stroke="#8c8c8c" stroke-width="0.7" stroke-linejoin="round"/><path d="M0.4,3.6 H13.6 V15.2 H0.4 Z" fill="#e4e4e4" stroke="#8c8c8c" stroke-width="0.6"/><circle cx="7.2" cy="9.2" r="4" fill="#57a5e5" stroke="#3a88cc" stroke-width="0.5"/><path d="M5.6,6.2 A4,4 0 0 1 10.8,10.6 L9.4,11.2 L5,6.8 Z" fill="#f7f7f7"/></g>
<g transform="translate(151,44.6)"><path d="M2,2.2 H12.8 M2,2.2 V12 M2,12 H12.8" stroke="#777" stroke-width="0.6" fill="none"/><rect x="0.5" y="0.6" width="3.1" height="3.1" fill="#fff" stroke="#666" stroke-width="0.6"/><rect x="11.2" y="0.5" width="3.3" height="3.3" fill="#57a5e5" stroke="#3a88cc" stroke-width="0.4"/><rect x="0.4" y="10.4" width="3.3" height="3.3" fill="#57a5e5" stroke="#3a88cc" stroke-width="0.4"/><rect x="11.2" y="10.4" width="3.3" height="3.3" fill="#57a5e5" stroke="#3a88cc" stroke-width="0.4"/></g>
<g transform="translate(173,45.4)"><path d="M7,0.4 L0.4,13.5 H7 Z" fill="#fbfbfb" stroke="#888" stroke-width="0.6" stroke-linejoin="round"/><path d="M7.6,0.4 L15,13.5 H7.6 Z" fill="#57a5e5"/></g>
<g transform="translate(194,45)"><path d="M3,2 L8,0.4 L11,1.6 Q15.4,5 14.4,10 Q12,14.6 7,14.4 L2,13.4 Q0,11 0.2,7 Q0.4,3.6 3,2 Z" fill="#8e6fd0"/><path d="M3,2 L8,0.4 L11,1.6 L8.4,4 L2.6,4.6 Z" fill="#a88ce0"/><path d="M10.6,5 Q14,6 14.4,10 Q12.6,14 10.4,14.2 Z" fill="#6c4fb4"/><path d="M6.4,5 V14.2" stroke="#7a5cc2" stroke-width="0.5"/><path d="M11.2,0.2 l0.8,1.8 l1.8,-0.9 l-0.7,1.9 l1.9,0.7 l-1.9,0.8 l0.8,1.8 l-1.9,-0.8 l-0.8,1.9 l-0.8,-1.9 l-1.8,0.8 l0.8,-1.8 l-1.9,-0.8 l1.9,-0.7 l-0.8,-1.9 l1.8,0.9 z" fill="#f5a623"/></g>
<g transform="translate(229.5,43.6)"><path d="M3.4,3.4 L7.7,11.4 L13.6,4.2 M5.4,6.6 L10.8,7" stroke="#4a90d0" stroke-width="1.2" fill="none" stroke-linejoin="round"/><path d="M5.6,6.8 L10.6,7.2 L7.7,11 Z" fill="#9cc6ec"/><rect x="1" y="0.6" width="3.3" height="3.3" fill="#fff" stroke="#444" stroke-width="0.6"/><path d="M14.2,1.6 L16.2,3 L15.4,5.4 H13 L12.2,3 Z" fill="#fff" stroke="#444" stroke-width="0.6" stroke-linejoin="round"/><circle cx="7.7" cy="13.1" r="2.2" fill="#eef4fb" stroke="#3f7fc0" stroke-width="0.8"/><circle cx="7.7" cy="13.1" r="0.8" fill="#777"/></g>
<g transform="translate(266,44)"><path d="M0.4,3.4 Q0.6,1 4,0.6 V15.2 H0.4 Z" fill="#e2e2e2" stroke="#9a9a9a" stroke-width="0.5"/><path d="M4,0.6 Q7,0 11.6,0.2 V6 Q10.4,7.6 11.6,9.4 V13 Q10,15.2 7,15.2 H4 Z" fill="#57a5e5"/><path d="M9.6,1 L11.6,0.2 V6 Q10.4,7.6 11.6,9.4 V13 L9.6,15 Z" fill="#3a88cc"/><path d="M11.4,7.6 H14" stroke="#222" stroke-width="0.7"/><path d="M13,6.4 L14.8,7.6 L13,8.8 Z" fill="#222"/></g>
<g transform="translate(287,44)"><path d="M0.4,4 L4,0.4 H9 Q15.6,1 15.8,8 V12 L12.4,15.2 H0.4 Z" fill="#d8d8d8" stroke="#9a9a9a" stroke-width="0.6" stroke-linejoin="round"/><path d="M4,0.4 H9 Q15.6,1 15.8,8 V12 L12.4,15.2 V10.6 Q12,4.6 6.4,4 H0.4 Z" fill="#57a5e5"/><path d="M4,0.4 H9 Q15.6,1 15.8,8 L12.4,10.6 Q12,4.6 6.4,4 H0.4 Z" fill="#5faae6"/><path d="M0.4,4 H6.4 Q12,4.6 12.4,10.6 V15.2 H0.4 Z" fill="#e0e0e0" stroke="#a8a8a8" stroke-width="0.4"/><path d="M0.4,4 L4,0.4 H7 L3.4,4 Z" fill="#ececec"/></g>
<g transform="translate(308,44)"><path d="M0.4,5 L5,0.4 H9.6 L16,6.6 V10.6 L11.4,15 H0.4 Z" fill="#d8d8d8" stroke="#9a9a9a" stroke-width="0.6" stroke-linejoin="round"/><path d="M5,0.4 H9.6 L16,6.6 L11.4,11 L5,4.8 L6.6,3 Z" fill="#57a5e5"/><path d="M5,0.4 H9.6 L16,6.6 L14.6,8 L8.4,2 L3.6,2 Z" fill="#62aeea"/><path d="M0.4,5 H5.2 L11.4,11 V15 H0.4 Z" fill="#e2e2e2" stroke="#a8a8a8" stroke-width="0.4"/><path d="M11.4,11 L16,6.6 V10.6 L11.4,15 Z" fill="#c4c4c4"/></g>
<g transform="translate(329.3,44)"><path d="M0.4,4 L4.4,0.4 H16 V11.4 L12,15 H0.4 Z" fill="#d4d4d4" stroke="#8c8c8c" stroke-width="0.7" stroke-linejoin="round"/><path d="M0.4,4 H12 V15 H0.4 Z" fill="#f2f2f2" stroke="#8c8c8c" stroke-width="0.6"/><path d="M0.4,4 L4.4,0.4 H16 L12,4 Z" fill="#e6e6e6" stroke="#8c8c8c" stroke-width="0.5"/><path d="M2.6,6.4 H6.2 V9.8 H9.8 V13 H2.6 Z" fill="#57a5e5" stroke="#3a88cc" stroke-width="0.4"/></g>
<g transform="translate(350.6,44)"><path d="M5,2.6 L7.6,0.2 H15.4 V7 L12.6,9.6 H10.4 V12.4 L7.8,15 H0.2 V8 L2.8,5.4 H5 Z" fill="#57a5e5"/><path d="M5,2.6 L7.6,0.2 H15.4 L12.8,2.6 Z M0.2,8 L2.8,5.4 H5 V8 Z" fill="#88c5f2"/><path d="M12.8,2.6 L15.4,0.2 V7 L12.8,9.6 Z M7.8,8 H10.4 V12.4 L7.8,15 Z" fill="#3a88cc"/></g>
<g transform="translate(372.4,44)"><path d="M0.2,9.4 L2.4,7 H14 V12.6 L11.6,15 H0.2 Z" fill="#d6d6d6"/><path d="M0.2,9.4 H11.6 V15 H0.2 Z" fill="#e6e6e6"/><path d="M11.6,9.4 L14,7 V12.6 L11.6,15 Z" fill="#c2c2c2"/><path d="M0.2,2.6 L2.4,0.2 H14 V5.4 L11.6,8 H0.2 Z" fill="#57a5e5"/><path d="M0.2,2.6 L2.4,0.2 H14 L11.6,2.6 Z" fill="#88c5f2"/><path d="M11.6,2.6 L14,0.2 V5.4 L11.6,8 Z" fill="#3a88cc"/></g>
<g transform="translate(400.6,51.5)"><path d="M-5.6,0 H5.6 M0,-5.6 V5.6" stroke="#222" stroke-width="1"/><path d="M-7.6,0 L-4.8,-2 V2 Z M7.6,0 L4.8,-2 V2 Z M0,-7.6 L-2,-4.8 H2 Z M0,7.6 L-2,4.8 H2 Z" fill="#222"/></g>
<g transform="translate(418.7,45)"><path d="M0.2,3.4 L2,1.6 H12.6 V12.6 L10.8,14.4 H0.2 Z" fill="#d8d8d8" stroke="#a0a0a0" stroke-width="0.4"/><path d="M0.2,3.4 H10.8 V14.4 H0.2 Z" fill="#ececec" stroke="#a8a8a8" stroke-width="0.4"/><path d="M5.5,3.4 V14.4 M0.2,8.8 H10.8" stroke="#b0b0b0" stroke-width="0.5"/><path d="M0.2,3.4 L2,1.6 H7.2 L5.5,3.4 V8.8 H0.2 Z" fill="#57a5e5"/><path d="M0.2,3.4 L2,1.6 H7.2 L5.5,3.4 Z" fill="#88c5f2"/><path d="M12.2,-0.6 l0.7,1.6 l1.6,-0.8 l-0.6,1.7 l1.7,0.6 l-1.7,0.7 l0.7,1.6 l-1.7,-0.7 l-0.7,1.7 l-0.7,-1.7 l-1.6,0.7 l0.7,-1.6 l-1.7,-0.7 l1.7,-0.6 l-0.7,-1.7 l1.6,0.8 z" fill="#f5a623"/></g>
<g transform="translate(441.2,45)"><path d="M0.4,4.4 Q1,1.4 4.4,0.6 Q6.4,2.4 6.2,6 L5.2,11 L0.4,14.2 Z" fill="#d4d4d4" stroke="#8e8e8e" stroke-width="0.6" stroke-linejoin="round"/><path d="M7.6,6 Q7.4,2.4 9.4,0.6 Q12.8,1.4 13.4,4.4 V14.2 L8.6,11 Z" fill="#c6c6c6" stroke="#8e8e8e" stroke-width="0.6" stroke-linejoin="round"/><path d="M4.4,0.6 L4.4,10 M9.4,0.6 V10" stroke="#a8a8a8" stroke-width="0.4"/></g>
<g transform="translate(464.4,45)"><path d="M0.4,5 Q0.6,1.2 4.6,0.4 Q9,1.2 9.2,5 V14.2 L6.6,12 V7 Q6.4,5.2 4.6,5 Q3,5.2 3,7 V12 L0.4,14.2 Z" fill="#d0d0d0" stroke="#8e8e8e" stroke-width="0.6" stroke-linejoin="round"/><path d="M3,7 V12 M6.6,7 V12" stroke="#aaa" stroke-width="0.4"/></g>
<g transform="translate(482,44)"><rect x="0" y="0" width="16" height="16" fill="#57a5e5"/><path d="M8,0 H16 V8 H13.6 Q13.8,9.8 12,9.8 Q10.2,9.8 10.4,8 H8 V5.6 Q6.2,5.8 6.2,4 Q6.2,2.2 8,2.4 Z" fill="#fafafa"/><path d="M0,8 H2.4 Q2.2,6.2 4,6.2 Q5.8,6.2 5.6,8 H8 V10.4 Q9.8,10.2 9.8,12 Q9.8,13.8 8,13.6 V16 H0 Z" fill="#fafafa"/><rect x="0" y="0" width="16" height="16" fill="none" stroke="#3a86cc" stroke-width="0.5"/></g>
<g transform="translate(510.6,44.4)"><path d="M7,0.6 L13.8,7 L7,13.4 L0.4,7 Z" fill="#ee9a50"/><path d="M7,0.6 L13.8,7 L10.4,10.2 L3.8,3.8 Z" fill="#f2a866"/><path d="M0.8,7.6 L4,5.2 L7.4,7.6 V14 H0.8 Z" fill="#e6e6e6" stroke="#9a9a9a" stroke-width="0.5" stroke-linejoin="round"/><path d="M4,5.2 L7.4,7.6 L9.6,6.2 L6.6,4 Z" fill="#d6d6d6" stroke="#9a9a9a" stroke-width="0.4"/><path d="M6.2,6.2 L9,9" stroke="#4caf50" stroke-width="0.8"/></g>
<g transform="translate(531.8,44)"><path d="M0.4,5 L4.6,0.6 V11 L0.4,15.4 Z" fill="#dedede" stroke="#9a9a9a" stroke-width="0.6" stroke-linejoin="round"/><path d="M5.2,5 L9.4,0.6 V11 L5.2,15.4 Z" fill="#5cb870" stroke="#3f9a55" stroke-width="0.5" stroke-linejoin="round"/><path d="M10.6,5 L14.8,0.6 V11 L10.6,15.4 Z" fill="#ee9a50" stroke="#d07c30" stroke-width="0.5" stroke-linejoin="round"/></g>
<g transform="translate(565.7,44)"><rect x="0" y="8" width="14.4" height="3.8" fill="#f0b429"/><rect x="0" y="10.6" width="14.4" height="1.2" fill="#d89a18"/><path d="M0.4,4 V8 M14,4 V8 M0.4,5.4 H14" stroke="#555" stroke-width="0.6"/><path d="M2.4,8 v1.4 M4.4,8 v1 M6.4,8 v1.4 M8.4,8 v1 M10.4,8 v1.4 M12.4,8 v1" stroke="#8a6a10" stroke-width="0.35"/></g>
<g transform="translate(598.7,44)"><path d="M3.4,0.6 H10.6 L14.6,4.6 V9 H3.4 Z" fill="#fdf6df" stroke="#c8961e" stroke-width="0.6" stroke-linejoin="round"/><path d="M10.6,0.6 L14.6,4.6 H10.6 Z" fill="#c8961e"/><rect x="3.4" y="8.4" width="11.2" height="7" fill="#d6a020"/><rect x="3.4" y="8.4" width="11.2" height="1.4" fill="#8a5a10"/><circle cx="6.6" cy="12.6" r="1.7" fill="#fbe9b0" stroke="#7a4e0c" stroke-width="0.5"/><path d="M9.6,11 h3.6 v3.2 h-3.6 z" fill="#fbe9b0" opacity="0.85"/><path d="M0,4.4 H5" stroke="#1a78d2" stroke-width="1.5"/><path d="M4.2,1.8 L7.6,4.4 L4.2,7 Z" fill="#1a78d2"/></g>
<g transform="translate(620,44)"><path d="M1.4,5 L5,1 H14.4 V11 L10.8,15 H1.4 Z" fill="#e2e2e2" stroke="#8e8e8e" stroke-width="0.6" stroke-linejoin="round"/><path d="M1.4,5 H10.8 V15 H1.4 Z" fill="#f0f0f0" stroke="#9a9a9a" stroke-width="0.5"/><path d="M10.8,5 L14.4,1 V11 L10.8,15 Z" fill="#cccccc" stroke="#9a9a9a" stroke-width="0.4"/><path d="M0,10.4 Q0.6,8.4 3.6,8.4" stroke="#222" stroke-width="1.5" fill="none"/><path d="M3.4,6 L7,8.6 L3.4,11.2 Z" fill="#222"/></g>
<g transform="translate(640,44)"><path d="M4,0.8 H11 L15.2,5 V15.2 H4 Z" fill="#fcfcfc" stroke="#777" stroke-width="0.6" stroke-linejoin="round"/><path d="M11,0.8 L15.2,5 H11 Z" fill="#666"/><path d="M0,4.6 H5.4" stroke="#1a78d2" stroke-width="1.5"/><path d="M4.6,2 L8,4.6 L4.6,7.2 Z" fill="#1a78d2"/></g>
<g transform="translate(662,44.6)"><rect x="0" y="0" width="14.3" height="13.9" fill="#5fa8e4"/><rect x="0" y="0" width="14.3" height="13.9" fill="none" stroke="#4a90d0" stroke-width="0.5"/><path d="M0,11 L4.6,6 L8,9.6 L10.4,7.6 L14.3,11.4 V13.9 H0 Z" fill="#3a88cc"/><circle cx="10.4" cy="3.6" r="1.3" fill="#f4f9ff"/></g>
<g transform="translate(691,42.5)"><rect x="0" y="0" width="19" height="18.1" fill="#1289d6"/><rect x="2.4" y="2.4" width="13" height="11" fill="none" stroke="#8fd0f8" stroke-width="0.7" stroke-dasharray="1.6 1"/><path d="M12.6,9 L17.4,13.6 H15.2 L16.4,16.2 L15.2,16.8 L14,14.2 L12.6,15.6 Z" fill="#fff"/></g>
<defs>
<linearGradient id="gOuter" x1="374" x2="626" y1="0" y2="0" gradientUnits="userSpaceOnUse"><stop offset="0" stop-color="#c6a152"/><stop offset="0.04" stop-color="#d2aa44"/><stop offset="0.12" stop-color="#deb238"/><stop offset="0.35" stop-color="#ecc036"/><stop offset="0.6" stop-color="#e7bb36"/><stop offset="0.88" stop-color="#e0b436"/><stop offset="0.96" stop-color="#d6ab3a"/><stop offset="1" stop-color="#c9a44e"/></linearGradient>
<linearGradient id="gInner" x1="382" x2="618" y1="0" y2="0" gradientUnits="userSpaceOnUse"><stop offset="0" stop-color="#cfa53c"/><stop offset="0.2" stop-color="#dbb037"/><stop offset="0.5" stop-color="#e8bc38"/><stop offset="0.8" stop-color="#e8bc38"/><stop offset="1" stop-color="#e6ba3c"/></linearGradient>
<clipPath id="cInnerTop"><ellipse cx="500" cy="236" rx="117.5" ry="67.9"/></clipPath>
</defs>
<g id="model">
<polygon points="310.2,337.1 315.3,340.0 315.3,385.0 310.2,381.8" fill="#e3b733" stroke="#33260a" stroke-width="0.7" stroke-linejoin="round" />
<polygon points="315.3,340.0 321.6,343.7 321.6,381.8 315.3,385.0" fill="#daad2f" stroke="#33260a" stroke-width="0.7" stroke-linejoin="round" />
<polygon points="689.8,337.1 684.7,340.0 684.7,385.0 689.8,381.8" fill="#daad2f" stroke="#33260a" stroke-width="0.7" stroke-linejoin="round" />
<polygon points="684.7,340.0 678.4,343.7 678.4,381.8 684.7,385.0" fill="#e3b733" stroke="#33260a" stroke-width="0.7" stroke-linejoin="round" />
<path d="M302.6,332.5 L310.2,337.1 L310.2,421.5 Q309.5,427 302.6,429.3 Z" fill="#daad2f" stroke="#33260a" stroke-width="0.7"/>
<path d="M697.4,332.5 L689.8,337.1 L689.8,421.5 Q690.5,427 697.4,429.3 Z" fill="#e3b733" stroke="#33260a" stroke-width="0.7"/>
<polygon points="294.9,403.0 302.6,398.6 302.6,516.2 294.9,519.7" fill="#daad2f" stroke="#33260a" stroke-width="0.7" stroke-linejoin="round" />
<polygon points="705.1,403.0 697.4,398.6 697.4,516.2 705.1,519.7" fill="#e3b733" stroke="#33260a" stroke-width="0.7" stroke-linejoin="round" />
<polygon points="266.4,287.5 489.8,416.5 489.8,632.5 462.4,616.2 462.4,498.1 453.7,485.9 453.7,420.4 302.6,332.5 302.6,398.6 294.9,403.0 294.9,519.7 266.4,503.7" fill="#e3b733" stroke="#33260a" stroke-width="0.7" stroke-linejoin="round" />
<polygon points="733.6,287.5 510.2,416.5 510.2,632.5 537.6,616.2 537.6,498.1 546.3,485.9 546.3,420.4 697.4,332.5 697.4,398.6 705.1,403.0 705.1,519.7 733.6,503.7" fill="#daad2f" stroke="#33260a" stroke-width="0.7" stroke-linejoin="round" />
<path d="M310.2,394.2 L302.6,398.6 M689.8,394.2 L697.4,398.6" stroke="#33260a" stroke-width="0.7" fill="none"/>
<polygon points="489.8,416.5 510.2,416.5 510.2,632.5 489.8,632.5" fill="#e4b72d" stroke="#33260a" stroke-width="0.7" stroke-linejoin="round" />
<polygon points="500.0,141.0 721.1,269.7 500.0,396.1 278.9,269.7" fill="#f1c32f" stroke="#33260a" stroke-width="0.7" stroke-linejoin="round" />
<polygon points="278.9,269.7 266.4,276.3 266.4,287.5" fill="#ddb548" stroke="#33260a" stroke-width="0.7" stroke-linejoin="round" />
<polygon points="721.1,269.7 733.6,276.3 733.6,287.5" fill="#ddb548" stroke="#33260a" stroke-width="0.7" stroke-linejoin="round" />
<polygon points="278.9,269.7 500.0,396.1 489.8,416.5 266.4,287.5" fill="#f3c631" stroke="#33260a" stroke-width="0.7" stroke-linejoin="round" />
<polygon points="721.1,269.7 500.0,396.1 510.2,416.5 733.6,287.5" fill="#eec02f" stroke="#33260a" stroke-width="0.7" stroke-linejoin="round" />
<polygon points="500.0,396.1 489.8,416.5 510.2,416.5" fill="#f1c32f" stroke="#33260a" stroke-width="0.7" stroke-linejoin="round" />
<path d="M373.9,236 L373.9,270.3 A126.1,72.1 0 0 0 626.1,270.3 L626.1,236 A126.1,72.1 0 0 1 373.9,236 Z" fill="url(#gOuter)" stroke="#33260a" stroke-width="0.7"/>
<ellipse cx="500" cy="236" rx="126.1" ry="72.1" fill="#f1c32f" stroke="#33260a" stroke-width="0.7"/>
<ellipse cx="500" cy="236" rx="117.5" ry="67.9" fill="url(#gInner)" stroke="none"/>
<ellipse cx="500" cy="268.5" rx="117.5" ry="67.9" fill="#f1c32f" stroke="#33260a" stroke-width="0.7" clip-path="url(#cInnerTop)"/>
<ellipse cx="500" cy="236" rx="117.5" ry="67.9" fill="none" stroke="#33260a" stroke-width="0.7"/>
</g>
</svg>
</body></html>
